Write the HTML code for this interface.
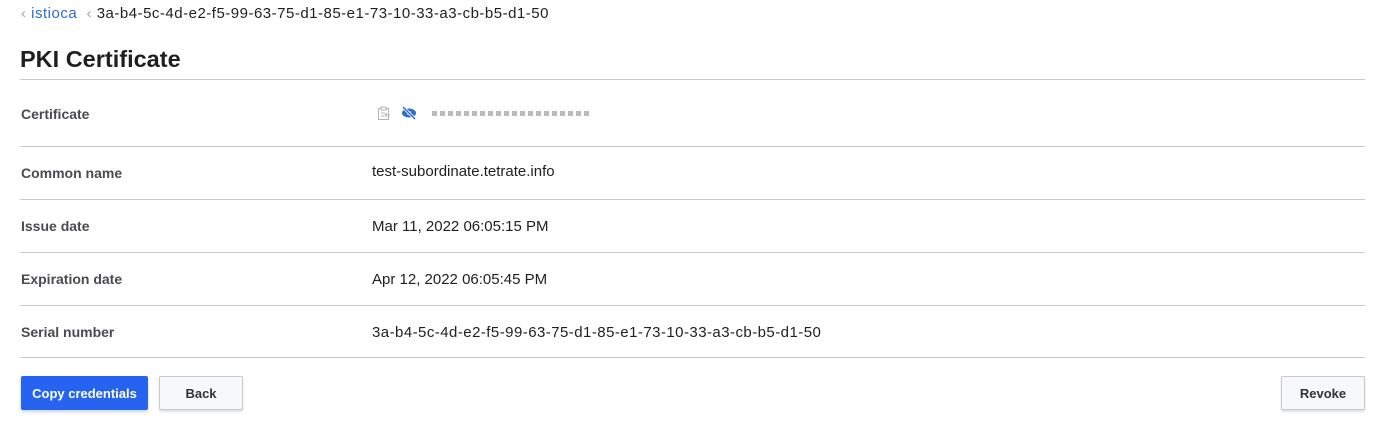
<!DOCTYPE html>
<html><head><style>
body{margin:0;width:1392px;height:438px;background:#fff;font-family:"Liberation Sans",sans-serif;position:relative;overflow:hidden;color:#1f1f22}
.a{position:absolute}
.line{position:absolute;left:20px;width:1345px;height:1px;background:#c8c9cc}
.lbl{position:absolute;left:21px;font-size:14px;font-weight:bold;color:#4a4b50}
.val{position:absolute;left:372px;font-size:15px;color:#1f1f22}
.btn{position:absolute;top:376px;height:34px;font-size:13px;font-weight:bold;display:flex;align-items:center;justify-content:center;border-radius:2px;box-sizing:border-box}
.dots{position:absolute;left:432px;top:111px;display:flex;gap:3px}
.dots i{width:5px;height:5px;background:#b9babd;display:block}
</style></head><body>
<div class="a" style="left:21px;top:5px;font-size:15px;letter-spacing:0.5px;"><span style="color:#9aa6bd">‹&nbsp;</span><span style="color:#2e6bd6">istioca</span>&nbsp; <span style="color:#9aa6bd">‹&nbsp;</span>3a-b4-5c-4d-e2-f5-99-63-75-d1-85-e1-73-10-33-a3-cb-b5-d1-50</div>
<div class="a" style="left:20px;top:46px;font-size:23.5px;font-weight:bold;color:#1f1f22">PKI Certificate</div>
<div class="line" style="top:79px"></div>
<div class="lbl" style="top:106px">Certificate</div>
<svg class="a" style="left:377px;top:106px" width="14" height="15" viewBox="0 0 14 15"><rect x="1.5" y="2.5" width="10" height="11" fill="none" stroke="#b5b6ba"/><rect x="4" y="1" width="5" height="3" fill="#fff" stroke="#b5b6ba"/><path d="M4 7h4M4 10h3M13 9H8m2-2-2 2 2 2" stroke="#b5b6ba" fill="none"/></svg>
<svg class="a" style="left:401px;top:106px" width="16" height="14" viewBox="0 0 16 14"><ellipse cx="8" cy="7" rx="7" ry="4.5" fill="#2e6bd6"/><circle cx="8" cy="7" r="2" fill="#fff"/><path d="M2 1l12 12" stroke="#fff" stroke-width="3"/><path d="M2 1l12 12" stroke="#2e6bd6" stroke-width="1.5"/></svg>
<div class="dots"><i></i><i></i><i></i><i></i><i></i><i></i><i></i><i></i><i></i><i></i><i></i><i></i><i></i><i></i><i></i><i></i><i></i><i></i><i></i><i></i></div>
<div class="line" style="top:146px"></div>
<div class="lbl" style="top:165px">Common name</div><div class="val" style="top:163px">test-subordinate.tetrate.info</div>
<div class="line" style="top:199px"></div>
<div class="lbl" style="top:218px">Issue date</div><div class="val" style="top:218px">Mar 11, 2022 06:05:15 PM</div>
<div class="line" style="top:252px"></div>
<div class="lbl" style="top:271px">Expiration date</div><div class="val" style="top:271px">Apr 12, 2022 06:05:45 PM</div>
<div class="line" style="top:305px"></div>
<div class="lbl" style="top:324px">Serial number</div><div class="val" style="top:324px;letter-spacing:0.45px">3a-b4-5c-4d-e2-f5-99-63-75-d1-85-e1-73-10-33-a3-cb-b5-d1-50</div>
<div class="line" style="top:357px"></div>
<div class="btn" style="left:21px;width:127px;background:#2563f0;color:#fff;box-shadow:0 2px 3px rgba(37,99,240,.25)">Copy credentials</div>
<div class="btn" style="left:159px;width:84px;background:#f7f8fa;border:1px solid #c8c9cc;color:#333;box-shadow:0 2px 2px rgba(0,0,0,.12)">Back</div>
<div class="btn" style="left:1281px;width:84px;background:#f7f8fa;border:1px solid #c8c9cc;color:#333;box-shadow:0 2px 2px rgba(0,0,0,.12)">Revoke</div>
</body></html>
